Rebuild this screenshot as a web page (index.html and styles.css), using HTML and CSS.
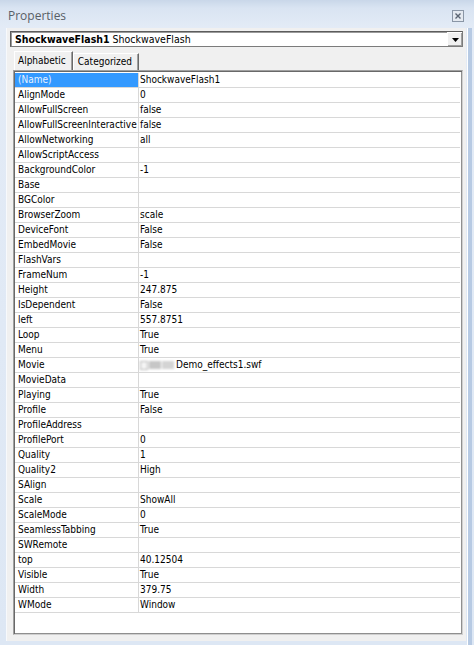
FILE: index.html
```html
<!DOCTYPE html>
<html>
<head>
<meta charset="utf-8">
<link rel="stylesheet" href="styles.css">
</head>
<body>
<div class="window">
  <div class="titlebar">
    <span class="title">Properties</span>
    <span class="close"><svg width="12" height="12" viewBox="0 0 12 12"><rect x="0.5" y="0.5" width="11" height="11" fill="#e4e9f0" stroke="#8a96a6"/><path d="M3.5 3.5 L8.5 8.5 M8.5 3.5 L3.5 8.5" stroke="#5a6472" stroke-width="1.4"/></svg></span>
  </div>
  <div class="frame">
    <div class="panel">
      <div class="combo">
        <div class="combo-text"><b>ShockwaveFlash1</b> ShockwaveFlash</div>
        <div class="combo-btn"><svg width="7" height="4" viewBox="0 0 7 4"><path d="M0 0 H7 L3.5 4 Z" fill="#000"/></svg></div>
      </div>
      <div class="tabs">
        <div class="tab active">Alphabetic</div>
        <div class="tab">Categorized</div>
      </div>
      <div class="grid">
        <div class="row sel"><div class="name">(Name)</div><div class="val">ShockwaveFlash1</div></div>
        <div class="row"><div class="name">AlignMode</div><div class="val">0</div></div>
        <div class="row"><div class="name">AllowFullScreen</div><div class="val">false</div></div>
        <div class="row"><div class="name">AllowFullScreenInteractive</div><div class="val">false</div></div>
        <div class="row"><div class="name">AllowNetworking</div><div class="val">all</div></div>
        <div class="row"><div class="name">AllowScriptAccess</div><div class="val"></div></div>
        <div class="row"><div class="name">BackgroundColor</div><div class="val">-1</div></div>
        <div class="row"><div class="name">Base</div><div class="val"></div></div>
        <div class="row"><div class="name">BGColor</div><div class="val"></div></div>
        <div class="row"><div class="name">BrowserZoom</div><div class="val">scale</div></div>
        <div class="row"><div class="name">DeviceFont</div><div class="val">False</div></div>
        <div class="row"><div class="name">EmbedMovie</div><div class="val">False</div></div>
        <div class="row"><div class="name">FlashVars</div><div class="val"></div></div>
        <div class="row"><div class="name">FrameNum</div><div class="val">-1</div></div>
        <div class="row"><div class="name">Height</div><div class="val">247.875</div></div>
        <div class="row"><div class="name">IsDependent</div><div class="val">False</div></div>
        <div class="row"><div class="name">left</div><div class="val">557.8751</div></div>
        <div class="row"><div class="name">Loop</div><div class="val">True</div></div>
        <div class="row"><div class="name">Menu</div><div class="val">True</div></div>
        <div class="row"><div class="name">Movie</div><div class="val"><span class="blur"><span class="b1"></span><span class="b2"></span><span class="b3"></span></span>Demo_effects1.swf</div></div>
        <div class="row"><div class="name">MovieData</div><div class="val"></div></div>
        <div class="row"><div class="name">Playing</div><div class="val">True</div></div>
        <div class="row"><div class="name">Profile</div><div class="val">False</div></div>
        <div class="row"><div class="name">ProfileAddress</div><div class="val"></div></div>
        <div class="row"><div class="name">ProfilePort</div><div class="val">0</div></div>
        <div class="row"><div class="name">Quality</div><div class="val">1</div></div>
        <div class="row"><div class="name">Quality2</div><div class="val">High</div></div>
        <div class="row"><div class="name">SAlign</div><div class="val"></div></div>
        <div class="row"><div class="name">Scale</div><div class="val">ShowAll</div></div>
        <div class="row"><div class="name">ScaleMode</div><div class="val">0</div></div>
        <div class="row"><div class="name">SeamlessTabbing</div><div class="val">True</div></div>
        <div class="row"><div class="name">SWRemote</div><div class="val"></div></div>
        <div class="row"><div class="name">top</div><div class="val">40.12504</div></div>
        <div class="row"><div class="name">Visible</div><div class="val">True</div></div>
        <div class="row"><div class="name">Width</div><div class="val">379.75</div></div>
        <div class="row"><div class="name">WMode</div><div class="val">Window</div></div>
      </div>
    </div>
  </div>
</div>
</body>
</html>
```
FILE: styles.css
```css
html, body {
  margin: 0;
  padding: 0;
}
body {
  width: 474px;
  height: 645px;
  overflow: hidden;
  background: linear-gradient(#c9d7e9 0px, #d9e4f2 8px, #e3ebf6 27px, #dde7f4 100%);
  font-family: "DejaVu Sans Condensed", "DejaVu Sans", sans-serif;
  font-stretch: condensed;
  font-size: 10px;
  color: #000;
}
.window {
  display: flex;
  flex-direction: column;
  height: 645px;
}
.titlebar {
  height: 28px;
  flex: none;
  display: flex;
  align-items: center;
  justify-content: space-between;
  padding: 3px 10px 0 8px;
  box-sizing: border-box;
}
.title {
  font-family: "Open Sans", "Liberation Sans", sans-serif;
  font-stretch: normal;
  font-size: 12px;
  color: #585e66;
}
.close {
  display: flex;
  width: 12px;
  height: 12px;
}
.frame {
  flex: 1;
  display: flex;
  padding: 0 0 4px 7px;
  background: linear-gradient(to right, transparent 467px, #ffffff 467px, #ffffff 468px, #b7cae3 468px, #b7cae3 472px, transparent 472px);
}
.panel {
  width: 459px;
  background: #f0f0f0;
  box-shadow: -1px 0 0 #f7f9fc;
  display: flex;
  flex-direction: column;
  padding: 3px 3px 6px 3px;
  box-sizing: border-box;
}
.combo {
  height: 16px;
  flex: none;
  display: flex;
  background: #fff;
  border: 1px solid #7b7b7b;
  border-top-color: #5c5c5c;
  border-left-color: #5c5c5c;
  box-shadow: inset 1px 1px 0 #9a9a9a;
  box-sizing: border-box;
}
.combo-text {
  flex: 1;
  padding-left: 4px;
  line-height: 14px;
  font-size: 10.5px;
  white-space: nowrap;
}
.combo-btn {
  width: 15px;
  flex: none;
  display: flex;
  align-items: center;
  justify-content: center;
  background: #f0f0f0;
  border-left: 1px solid #fff;
  border-top: 1px solid #fff;
  box-shadow: inset -1px -1px 0 #a0a0a0;
  box-sizing: border-box;
}
.tabs {
  display: flex;
  align-items: flex-end;
  height: 19px;
  margin-top: 4px;
  padding-left: 4px;
  flex: none;
}
.tab {
  height: 17px;
  line-height: 16px;
  padding: 0 6px 0 4px;
  border-top: 1px solid #fff;
  border-left: 1px solid #fff;
  border-right: 1px solid #6a6a6a;
  box-shadow: inset -1px 0 0 #a0a0a0;
  box-sizing: border-box;
  background: #f0f0f0;
}
.tab.active {
  height: 19px;
  line-height: 18px;
  padding: 0 6px 0 3px;
}
.grid {
  flex: 1;
  margin-left: 3px;
  background: #fff;
  border: 1px solid #a0a0a0;
  border-right-color: #cfcfcf;
  border-bottom-color: #cfcfcf;
  box-shadow: inset 1px 1px 0 #696969, inset -1px -1px 0 #8f8f8f;
  padding: 2px 2px 2px 1px;
  box-sizing: border-box;
}
.row {
  display: flex;
  height: 15px;
  border-bottom: 1px solid #d8d8d8;
  box-sizing: border-box;
  line-height: 14px;
  white-space: nowrap;
}
.name {
  width: 124px;
  flex: none;
  padding-left: 3px;
  border-right: 1px solid #d8d8d8;
  box-sizing: border-box;
  overflow: hidden;
}
.val {
  flex: 1;
  padding-left: 1px;
  display: flex;
  align-items: center;
}
.sel .name {
  background: #3399ff;
  color: #e6f1ff;
}
.blur {
  display: flex;
  align-items: center;
  gap: 1px;
  width: 36px;
  height: 10px;
  filter: blur(0.8px);
}
.b1 {
  width: 6px;
  height: 7px;
  border: 1px solid #b8b8b8;
  background: #f4f4f4;
}
.b2 {
  width: 12px;
  height: 8px;
  background: #c6c6c6;
}
.b3 {
  width: 12px;
  height: 8px;
  background: #d4d4d4;
}
```
